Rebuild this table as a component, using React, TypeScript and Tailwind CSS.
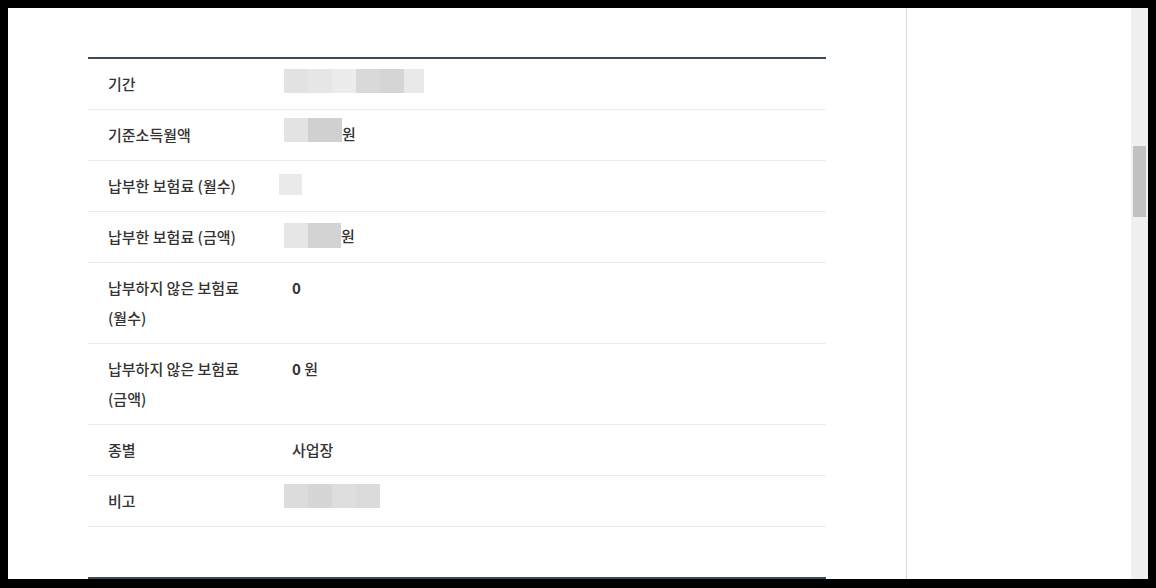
import React from "react";

type Blur = { w: number; c: string };

interface Row {
  label: string;
  value?: React.ReactNode;
  blur?: Blur[];
  blurTop?: number;
  blurH?: number;
  suffix?: string;
}

const rows: Row[] = [
  {
    label: "기간",
    blurTop: 0,
    blurH: 24,
    blur: [
      { w: 24, c: "#e2e2e2" },
      { w: 24, c: "#e6e6e6" },
      { w: 24, c: "#ececec" },
      { w: 24, c: "#d9d9d9" },
      { w: 24, c: "#d5d5d5" },
      { w: 20, c: "#e9e9e9" },
    ],
  },
  {
    label: "기준소득월액",
    blurTop: -2,
    blurH: 24,
    blur: [
      { w: 24, c: "#e3e3e3" },
      { w: 34, c: "#d0d0d0" },
    ],
    suffix: "원",
  },
  {
    label: "납부한 보험료 (월수)",
    blurTop: 3,
    blurH: 21,
    blur: [{ w: 23, c: "#eaeaea" }],
  },
  {
    label: "납부한 보험료 (금액)",
    blurTop: 1,
    blurH: 25,
    blur: [
      { w: 24, c: "#e6e6e6" },
      { w: 33, c: "#d3d3d3" },
    ],
    suffix: "원",
  },
  {
    label: "납부하지 않은 보험료 (월수)",
    value: <span className="font-bold">0</span>,
  },
  {
    label: "납부하지 않은 보험료 (금액)",
    value: (
      <>
        <span className="font-bold">0</span> 원
      </>
    ),
  },
  { label: "종별", value: "사업장" },
  {
    label: "비고",
    blurTop: -2,
    blurH: 24,
    blur: [
      { w: 24, c: "#dcdcdc" },
      { w: 24, c: "#d6d6d6" },
      { w: 24, c: "#dedede" },
      { w: 24, c: "#dbdbdb" },
    ],
  },
];

// pixelated placeholder blocks standing in for masked values
const BlurValue: React.FC<{ row: Row }> = ({ row }) => {
  const offset = row.label === "납부한 보험료 (월수)" ? "-ml-[13px]" : "-ml-[8px]";
  return (
    <div className={`flex items-start ${offset}`}>
      <div
        className="flex"
        style={{ marginTop: row.blurTop, height: row.blurH }}
      >
        {row.blur!.map((b, i) => (
          <div key={i} style={{ width: b.w, backgroundColor: b.c }} />
        ))}
      </div>
      {row.suffix && <span className="leading-[30px] -mt-[1px]">{row.suffix}</span>}
    </div>
  );
};

export default function App() {
  return (
    <div className="w-full h-[588px] bg-black pt-2 pl-2 pr-2 pb-[9px] overflow-hidden">
      <div
        className="flex h-full bg-white overflow-hidden text-[15px] font-medium text-[#333] break-keep"
        style={{ fontFamily: '"Noto Sans CJK KR", "Noto Sans", sans-serif' }}
      >
        {/* main column */}
        <div className="w-[899px] shrink-0 border-r border-[#d9d9d9] pl-20 pt-[49px] overflow-hidden">
          <div className="w-[738px] border-t-2 border-[#3b4b58]">
            {rows.map((r) => (
              <div key={r.label} className="flex border-b border-[#ebebeb]">
                <div className="w-[184px] shrink-0 pl-5 pr-4 py-[10px] leading-[30px]">
                  {r.label}
                </div>
                <div className="flex-1 pl-5 py-[10px] leading-[30px]">
                  {r.blur ? <BlurValue row={r} /> : r.value}
                </div>
              </div>
            ))}
          </div>
          <div className="w-[738px] mt-[50px] border-t-2 border-[#3b4b58] h-4" />
        </div>

        {/* side column */}
        <div className="w-[224px] shrink-0" />

        {/* scrollbar */}
        <div className="w-[17px] shrink-0 bg-[#f0f0f0] flex justify-center">
          <div className="w-[13px] h-[71px] mt-[138px] bg-[#c1c1c1]" />
        </div>
      </div>
    </div>
  );
}
